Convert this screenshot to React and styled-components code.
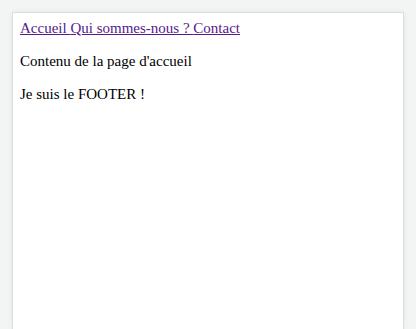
import React from "react"
import styled, { createGlobalStyle } from "styled-components"

const GlobalStyle = createGlobalStyle`
  html, body {
    margin: 0;
    padding: 0;
    background: #f3f4f4;
    overflow: hidden;
  }
`

const Page = styled.div`
  padding: 12px 12px 0 12px;
  height: 100vh;
  box-sizing: border-box;
`

const Frame = styled.div`
  background: #fff;
  border: 1px solid #dcdcdc;
  border-bottom: none;
  box-shadow: 0 0 6px rgba(0, 0, 0, 0.06);
  height: 100%;
  box-sizing: border-box;
  padding: 6px 7px;
  font-family: "Liberation Serif", "Times New Roman", serif;
  font-size: 15px;
  color: #000;
`

const Nav = styled.nav`
  line-height: 18px;
`

const NavLink = styled.a`
  color: #551a8b;
  text-decoration: underline;
`

const Text = styled.p`
  margin: 15px 0;
  line-height: 18px;
`

const links = ["Accueil", "Qui sommes-nous ?", "Contact"]

const App = () => {
  return (
    <>
      <GlobalStyle />
      <Page>
        <Frame>
          <Nav>
            {links.map((label, i) => (
              <NavLink href="#" key={i}>
                {i < links.length - 1 ? `${label} ` : label}
              </NavLink>
            ))}
          </Nav>
          <Text>Contenu de la page d'accueil</Text>
          <Text>Je suis le FOOTER !</Text>
        </Frame>
      </Page>
    </>
  )
}

export default App
